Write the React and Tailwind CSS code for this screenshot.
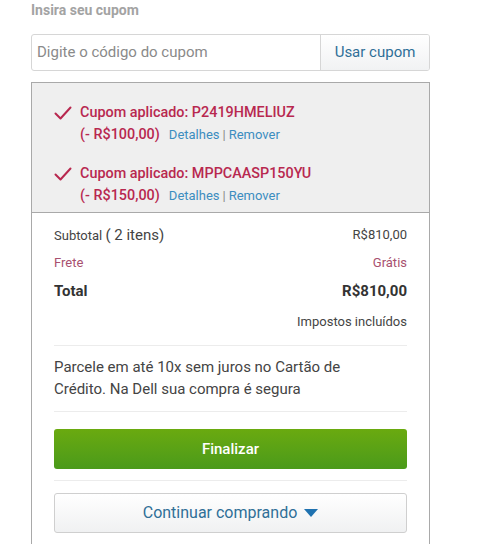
import React from 'react';

function Check() {
  return (
    <svg width="18" height="14" viewBox="0 0 18 14" className="shrink-0">
      <path d="M1.5 7.5 L6.5 12.5 L16.5 1.5" fill="none" stroke="#b8284f" strokeWidth="2" strokeLinecap="round" strokeLinejoin="round" />
    </svg>
  );
}

const coupons = [
  { code: 'P2419HMELIUZ', value: '(- R$100,00)' },
  { code: 'MPPCAASP150YU', value: '(- R$150,00)' },
];

export default function App() {
  return (
    <div className="w-[500px] h-[544px] bg-white overflow-hidden" style={{ fontFamily: 'Roboto, "Liberation Sans", sans-serif' }}>
      <div className="pl-[31px] w-[430px]">
        {/* Title */}
        <div className="h-[22px] -mt-[1px] text-[14px] font-bold text-[#a3a3a3] leading-[22px]">Insira seu cupom</div>

        {/* Input */}
        <div className="mt-[13px] flex h-[37px] border border-[#d6d6d6] rounded-[3px] overflow-hidden">
          <div className="flex-1 flex items-center pl-[5px] text-[15px] text-[#8a8a8a]">Digite o código do cupom</div>
          <div className="w-[109px] flex items-center justify-center border-l border-[#d6d6d6] bg-gradient-to-b from-[#ffffff] to-[#f1f2f3] text-[15px] text-[#2f6f97]">
            Usar cupom
          </div>
        </div>

        {/* Box */}
        <div className="mt-[11px] border-x border-[#a9a9a9] h-[480px]">
          <div className="bg-[#efefef] border-t border-b border-[#a9a9a9] pt-[19px] pb-[5px] pl-[22px] flex flex-col gap-[17px]">
            {coupons.map((c) => (
              <div key={c.code}>
                <div className="flex items-center h-[22px]">
                  <Check />
                  <span className="ml-[8px] text-[14.4px] font-medium text-[#b8284f]">Cupom aplicado: {c.code}</span>
                </div>
                <div className="flex items-center h-[22px] pl-[26px]">
                  <span className="text-[14.4px] font-medium text-[#b8284f]">{c.value}</span>
                  <span className="ml-[9px] text-[13px] text-[#3c8dbf]">Detalhes</span>
                  <span className="mx-[3px] text-[13px] text-[#888]">|</span>
                  <span className="text-[13px] text-[#3c8dbf]">Remover</span>
                </div>
              </div>
            ))}
          </div>

          <div className="px-[22px]">
            <div className="flex justify-between items-center h-[22px] mt-[11px] text-[#444]">
              <span className="text-[13px]">Subtotal <span className="text-[15px]">( 2 itens)</span></span>
              <span className="text-[13px]">R$810,00</span>
            </div>
            <div className="flex justify-between items-center h-[22px] mt-[6px] text-[13px] text-[#a8506f]">
              <span>Frete</span>
              <span>Grátis</span>
            </div>
            <div className="flex justify-between items-center h-[22px] mt-[6px] text-[15px] font-bold text-[#333]">
              <span>Total</span>
              <span>R$810,00</span>
            </div>
            <div className="flex justify-end items-center h-[22px] mt-[9px] text-[13px] text-[#444]">Impostos incluídos</div>

            <div className="mt-[12px] border-t border-[#ececec]"></div>
            <div className="pt-[10px] pb-[11px] text-[15px] leading-[22px] text-[#444]">
              Parcele em até 10x sem juros no Cartão de<br />Crédito. Na Dell sua compra é segura
            </div>
            <div className="border-t border-[#ececec]"></div>

            <div className="mt-[17px] h-[40px] rounded-[3px] bg-gradient-to-b from-[#6aaa0f] to-[#4a9a1a] flex items-center justify-center text-[15px] font-medium text-white">
              Finalizar
            </div>
            <div className="mt-[11px] border-t border-[#ececec]"></div>

            <div className="mt-[12px] h-[40px] rounded-[3px] border border-[#cfcfcf] bg-gradient-to-b from-[#ffffff] to-[#f0f1f2] flex items-center justify-center text-[16px] text-[#2f6f97]">
              Continuar comprando
              <svg width="14" height="8" viewBox="0 0 14 8" className="ml-[7px]">
                <path d="M0 0 L14 0 L7 8 Z" fill="#1f72b0" />
              </svg>
            </div>
          </div>
        </div>
      </div>
    </div>
  );
}
